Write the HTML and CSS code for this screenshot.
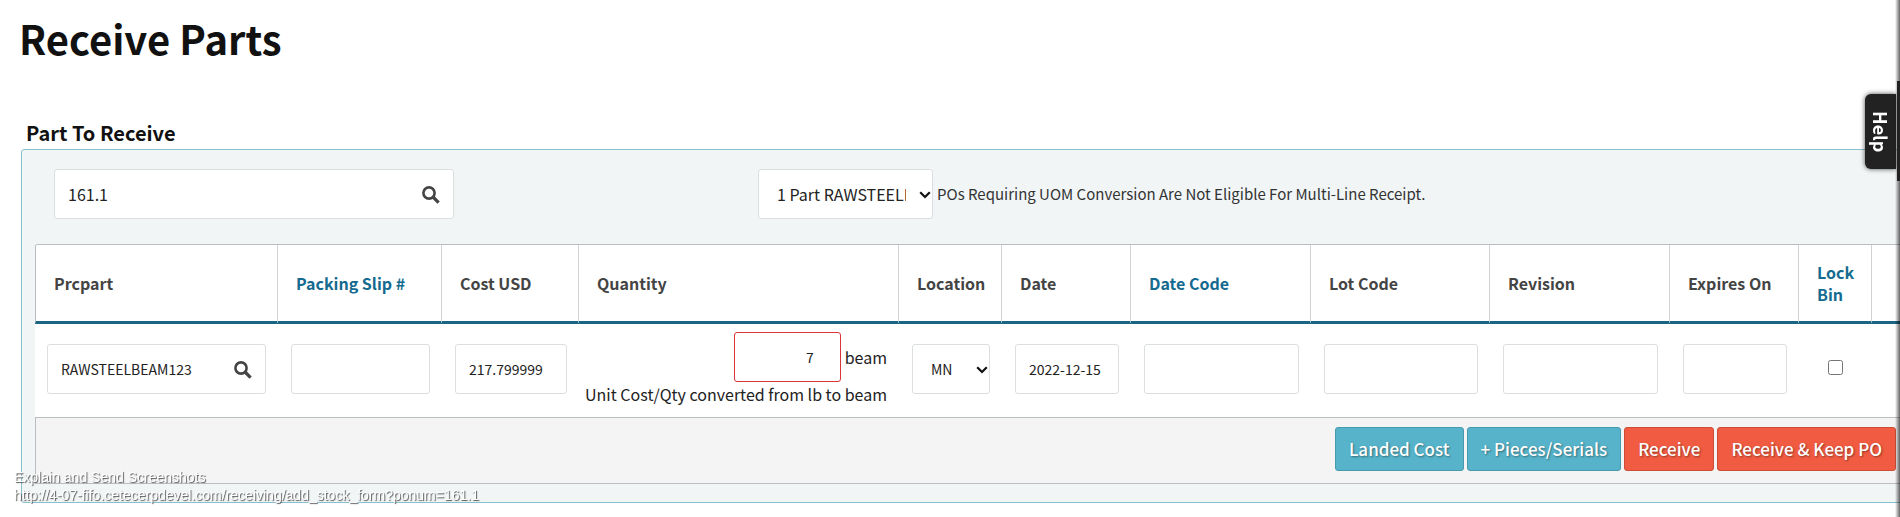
FILE: index.html
```html
<!DOCTYPE html>
<html lang="en">
<head>
<meta charset="utf-8">
<title>Receive Parts</title>
<link rel="stylesheet" href="styles.css">
</head>
<body>
<main class="page">
  <h1 class="page-title">Receive Parts</h1>
  <h2 class="section-title">Part To Receive</h2>
  <form class="panel">
    <div class="lookup">
      <div class="search lookup-search">
        <input class="field field-large" type="text" value="161.1" aria-label="PO number">
        <button class="search-button" type="button" aria-label="Search PO">
          <svg class="icon" viewBox="0 0 18 18"><circle cx="7" cy="7" r="5.6" fill="none" stroke="currentColor" stroke-width="2.6"/><path d="M11 11l5.6 5.6" stroke="currentColor" stroke-width="3.2"/></svg>
        </button>
      </div>
      <div class="lookup-part">
        <div class="select part-select">
          <select class="field field-large select-field" aria-label="Part"><option>1 Part RAWSTEELBEAM123</option></select>
          <svg class="chevron" viewBox="0 0 12 8"><path d="M1.2 1.2L6 6l4.800-4.800" fill="none" stroke="currentColor" stroke-width="2.200"/></svg>
        </div>
        <span class="note">POs Requiring UOM Conversion Are Not Eligible For Multi-Line Receipt.</span>
      </div>
    </div>
    <table class="parts">
      <colgroup>
        <col class="col-part"><col class="col-slip"><col class="col-cost"><col class="col-qty"><col class="col-location"><col class="col-date"><col class="col-code"><col class="col-lot"><col class="col-code"><col class="col-date"><col class="col-lock"><col>
      </colgroup>
      <thead>
        <tr>
          <th>Prcpart</th>
          <th><a class="head-link" href="#">Packing Slip #</a></th>
          <th>Cost USD</th>
          <th>Quantity</th>
          <th>Location</th>
          <th>Date</th>
          <th><a class="head-link" href="#">Date Code</a></th>
          <th>Lot Code</th>
          <th>Revision</th>
          <th>Expires On</th>
          <th><a class="head-link" href="#">Lock Bin</a></th>
          <th></th>
        </tr>
      </thead>
      <tbody>
        <tr>
          <td>
            <div class="search">
              <input class="field" type="text" value="RAWSTEELBEAM123" aria-label="Prcpart">
              <button class="search-button" type="button" aria-label="Search part">
                <svg class="icon" viewBox="0 0 18 18"><circle cx="7" cy="7" r="5.6" fill="none" stroke="currentColor" stroke-width="2.6"/><path d="M11 11l5.6 5.6" stroke="currentColor" stroke-width="3.2"/></svg>
              </button>
            </div>
          </td>
          <td><input class="field" type="text" aria-label="Packing slip number"></td>
          <td><input class="field" type="text" value="217.799999" aria-label="Cost USD"></td>
          <td class="qty-cell">
            <div class="qty">
              <input class="field field-qty" id="qty" type="text" value="7">
              <label for="qty">beam</label>
            </div>
            <div class="qty-note">Unit Cost/Qty converted from lb to beam</div>
          </td>
          <td>
            <div class="select">
              <select class="field select-field" aria-label="Location"><option>MN</option></select>
              <svg class="chevron" viewBox="0 0 12 8"><path d="M1.2 1.2L6 6l4.800-4.800" fill="none" stroke="currentColor" stroke-width="2.200"/></svg>
            </div>
          </td>
          <td><input class="field" type="text" value="2022-12-15" aria-label="Date"></td>
          <td><input class="field" type="text" aria-label="Date code"></td>
          <td><input class="field" type="text" aria-label="Lot code"></td>
          <td><input class="field" type="text" aria-label="Revision"></td>
          <td><input class="field" type="text" aria-label="Expires on"></td>
          <td class="lock-cell"><input class="check" type="checkbox" aria-label="Lock bin"></td>
          <td></td>
        </tr>
      </tbody>
      <tfoot>
        <tr>
          <td colspan="12">
            <div class="actions">
              <button class="button button-blue" type="button">Landed Cost</button>
              <button class="button button-blue" type="button">+ Pieces/Serials</button>
              <button class="button button-red" type="button">Receive</button>
              <button class="button button-red" type="button">Receive &amp; Keep PO</button>
            </div>
          </td>
        </tr>
      </tfoot>
    </table>
  </form>
</main>
<button class="help" type="button">Help</button>
<div class="edge"></div>
<div class="drawer"></div>
<footer class="caption">
  <div>Explain and Send Screenshots</div>
  <div>http://4-07-fifo.cetecerpdevel.com/receiving/add_stock_form?ponum=161.1</div>
</footer>
</body>
</html>
```
FILE: styles.css
```css
* {
  box-sizing: border-box;
}

body {
  margin: 0;
  background: #fff;
  color: #222;
  font-family: "Noto Sans CJK SC", "Noto Sans", sans-serif;
  font-size: 16px;
  line-height: 24px;
  overflow: hidden;
}

.page {
  padding: 10px 0 16px 19px;
}

.page-title {
  margin: 0;
  color: #111;
  font-size: 40px;
  line-height: 56px;
}

.section-title {
  margin: 52px 0 0 7px;
  color: #111;
  font-size: 20px;
  line-height: 30px;
}

/* The panel runs past the right edge of the window. */
.panel {
  margin: 1px -20px 0 2px;
  padding: 19px 0 18px 13px;
  background: #f1f5f6;
  border: 1px solid #8abfd2;
  border-radius: 3px;
}

.lookup {
  display: flex;
  margin-bottom: 25px;
  padding-left: 19px;
}

.lookup-search {
  width: 400px;
}

.lookup-part {
  display: flex;
  align-items: center;
  gap: 4px;
  margin-left: 304px;
}

.field {
  display: block;
  width: 100%;
  height: 50px;
  padding: 0 13px;
  background: #fff;
  border: 1px solid #dcdfe0;
  border-radius: 3px;
  color: #222;
  font-family: inherit;
  font-size: 14px;
}

.field-large {
  font-size: 16px;
}

.select {
  position: relative;
}

.part-select {
  width: 175px;
}

.select-field {
  appearance: none;
  padding: 0 26px 0 18px;
}

.chevron {
  position: absolute;
  top: 22px;
  right: 2px;
  width: 12px;
  height: 8px;
  color: #111;
  pointer-events: none;
}

.note {
  color: #333;
  font-size: 15px;
  white-space: nowrap;
}

.search {
  position: relative;
}

.search-button {
  position: absolute;
  top: 17px;
  right: 14px;
  width: 18px;
  height: 18px;
  padding: 0;
  background: none;
  border: 0;
  color: #444;
}

.icon {
  display: block;
  width: 18px;
  height: 18px;
}

.parts {
  width: 100%;
  table-layout: fixed;
  border-collapse: separate;
  border-spacing: 0;
  border-top: 1px solid #b9bebf;
  border-radius: 3px 0 0 0;
  background: #fff;
}

.col-part { width: 243px; }
.col-slip { width: 164px; }
.col-cost { width: 137px; }
.col-qty { width: 320px; }
.col-location { width: 103px; }
.col-date { width: 129px; }
.col-code { width: 180px; }
.col-lot { width: 179px; }
.col-lock { width: 73px; }

th {
  height: 79px;
  padding: 0 12px 0 18px;
  border-right: 1px solid #d0d3d4;
  border-bottom: 3px solid #1b6583;
  color: #444;
  font-size: 16px;
  line-height: 22px;
  text-align: left;
}

th:first-child {
  border-left: 1px solid #b9bebf;
}

.head-link {
  color: #146a8f;
  text-decoration: none;
}

td {
  height: 93px;
  padding: 0 12px 3px 13px;
}

td:first-child {
  padding-left: 12px;
}

.qty-cell {
  padding-left: 4px;
  text-align: right;
  white-space: nowrap;
}

.qty {
  display: flex;
  align-items: center;
  justify-content: flex-end;
  gap: 4px;
}

.field-qty {
  width: 107px;
  padding-right: 26px;
  border-color: #d9363a;
  text-align: right;
}

.lock-cell {
  padding: 0 29px;
}

.check {
  display: block;
  width: 15px;
  height: 15px;
  margin: 0 0 6px;
}

tfoot td,
tfoot td:first-child {
  height: 67px;
  padding: 0 0 4px;
  background: #f4f4f4;
  border: 1px solid #b9bebf;
}

/* Space on the right for the part of the panel that is out of view. */
.actions {
  display: flex;
  justify-content: flex-end;
  gap: 3px;
  padding-right: 22px;
}

.button {
  height: 44px;
  padding: 0 13px;
  border: 1px solid;
  border-radius: 3px;
  color: #fff;
  font-family: inherit;
  font-size: 17px;
  font-weight: 500;
  text-shadow: 1px 1px 2px rgba(0, 0, 0, 0.4);
  white-space: nowrap;
}

.button-blue {
  background: #56b3c9;
  border-color: #4799ad;
}

.button-red {
  background: #f05b41;
  border-color: #cc4c36;
}

.help {
  position: fixed;
  top: 94px;
  right: 4px;
  width: 31px;
  height: 75px;
  padding: 0;
  background: #222;
  border: 0;
  border-radius: 6px 0 0 6px;
  box-shadow: 0 0 5px rgba(0, 0, 0, 0.7);
  color: #fff;
  font-family: inherit;
  font-size: 18px;
  font-weight: 700;
  writing-mode: vertical-rl;
}

.edge {
  position: fixed;
  top: 0;
  right: 0;
  bottom: 0;
  width: 5px;
  background: linear-gradient(to right, rgba(0, 0, 0, 0), rgba(0, 0, 0, 0.6));
}

.drawer {
  position: fixed;
  top: 81px;
  right: 0;
  width: 3px;
  height: 100px;
  background: #222;
}

.caption {
  position: fixed;
  bottom: 13px;
  left: 14px;
  color: #fff;
  font-family: "Liberation Sans", Arial, sans-serif;
  font-size: 14px;
  line-height: 18px;
  text-shadow: 1px 1px 1px #555;
}
```
